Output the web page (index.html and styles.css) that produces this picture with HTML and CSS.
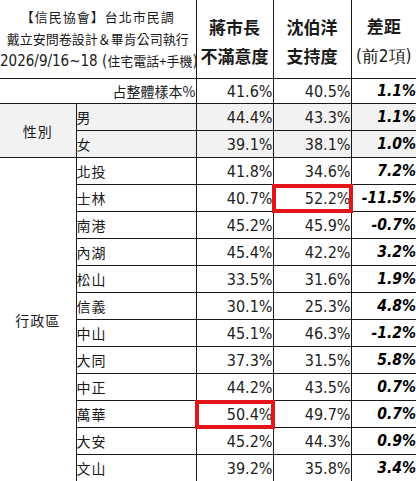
FILE: index.html
```html
<!DOCTYPE html>
<html lang="zh-Hant">
<head>
  <meta charset="UTF-8" />
  <meta name="viewport" content="width=device-width, initial-scale=1.0"/>
  <title>信民協會 台北市民調</title>
  <link rel="stylesheet" href="styles.css">
</head>
<body>
  <table class="poll">
    <colgroup>
      <col class="c-group">
      <col class="c-name">
      <col class="c-num">
      <col class="c-num2">
      <col class="c-diff">
    </colgroup>
    <thead>
      <tr class="head-row">
        <th colspan="2" class="title">
          <div class="wide">【信民協會】台北市民調</div>
          <div>戴立安問卷設計＆畢肯公司執行</div>
          <div><span class="narrow">2026/9/16~18 (</span>住宅電話+手機<span class="narrow">)</span></div>
        </th>
        <th class="col-head">蔣市長<br>不滿意度</th>
        <th class="col-head">沈伯洋<br>支持度</th>
        <th class="col-head diff-head">差距<br><span class="narrow">(前2項)</span></th>
      </tr>
    </thead>
    <tbody>
      <tr class="sample">
        <td colspan="2" class="sample-label">占整體樣本%</td>
        <td class="num">41.6%</td>
        <td class="num">40.5%</td>
        <td class="num diff">1.1%</td>
      </tr>
      <tr class="gray">
        <td rowspan="2" class="group">性別</td>
        <td class="name">男</td>
        <td class="num">44.4%</td>
        <td class="num">43.3%</td>
        <td class="num diff">1.1%</td>
      </tr>
      <tr class="gray">
        <td class="name">女</td>
        <td class="num">39.1%</td>
        <td class="num">38.1%</td>
        <td class="num diff">1.0%</td>
      </tr>
      <tr>
        <td rowspan="13" class="group">行政區</td>
        <td class="name">北投</td>
        <td class="num">41.8%</td>
        <td class="num">34.6%</td>
        <td class="num diff">7.2%</td>
      </tr>
      <tr>
        <td class="name">士林</td>
        <td class="num">40.7%</td>
        <td class="num mark">52.2%</td>
        <td class="num diff">-11.5%</td>
      </tr>
      <tr>
        <td class="name">南港</td>
        <td class="num">45.2%</td>
        <td class="num">45.9%</td>
        <td class="num diff">-0.7%</td>
      </tr>
      <tr>
        <td class="name">內湖</td>
        <td class="num">45.4%</td>
        <td class="num">42.2%</td>
        <td class="num diff">3.2%</td>
      </tr>
      <tr>
        <td class="name">松山</td>
        <td class="num">33.5%</td>
        <td class="num">31.6%</td>
        <td class="num diff">1.9%</td>
      </tr>
      <tr>
        <td class="name">信義</td>
        <td class="num">30.1%</td>
        <td class="num">25.3%</td>
        <td class="num diff">4.8%</td>
      </tr>
      <tr>
        <td class="name">中山</td>
        <td class="num">45.1%</td>
        <td class="num">46.3%</td>
        <td class="num diff">-1.2%</td>
      </tr>
      <tr>
        <td class="name">大同</td>
        <td class="num">37.3%</td>
        <td class="num">31.5%</td>
        <td class="num diff">5.8%</td>
      </tr>
      <tr>
        <td class="name">中正</td>
        <td class="num">44.2%</td>
        <td class="num">43.5%</td>
        <td class="num diff">0.7%</td>
      </tr>
      <tr>
        <td class="name">萬華</td>
        <td class="num mark">50.4%</td>
        <td class="num">49.7%</td>
        <td class="num diff">0.7%</td>
      </tr>
      <tr>
        <td class="name">大安</td>
        <td class="num">45.2%</td>
        <td class="num">44.3%</td>
        <td class="num diff">0.9%</td>
      </tr>
      <tr>
        <td class="name">文山</td>
        <td class="num">39.2%</td>
        <td class="num">35.8%</td>
        <td class="num diff">3.4%</td>
      </tr>
    </tbody>
  </table>
</body>
</html>
```

FILE: styles.css
```css
body {
  margin: 0;
  background-color: #fff;
  font-family: "Noto Sans CJK TC", sans-serif;
  color: #1a1a1a;
  overflow: hidden;
}

.poll {
  border-collapse: collapse;
  table-layout: fixed;
  width: 416px;
}

.c-group { width: 76px; }
.c-name { width: 120px; }
.c-num { width: 77px; }
.c-num2 { width: 78px; }
.c-diff { width: 65px; }

.poll th,
.poll td {
  border: 1px solid #1a1a1a;
  padding: 0;
}

.poll tr:first-child th {
  border-top: none;
}

.poll tr > :first-child {
  border-left: none;
}

.poll tr > :last-child {
  border-right: none;
}

.group {
  border-left: none;
}

.narrow {
  font-family: "Liberation Sans Narrow", "DejaVu Sans Condensed", sans-serif;
}

.head-row th {
  height: 74px;
  font-weight: normal;
}

.title {
  font-size: 13px;
  line-height: 22px;
  text-align: center;
  white-space: nowrap;
  padding-top: 2px;
}

.title .wide {
  letter-spacing: 1px;
}

.title .narrow {
  font-size: 15px;
}

.poll th.col-head {
  font-size: 17px;
  line-height: 29px;
  font-weight: bold;
  white-space: nowrap;
  padding-top: 4px;
}

.diff-head .narrow {
  font-size: 17px;
  font-weight: normal;
}

.sample td {
  height: 24px;
}

.sample-label {
  text-align: right;
  font-size: 14px;
  padding-right: 3px;
}

.poll tbody tr:not(.sample) td {
  height: 26px;
}

.gray td {
  background-color: #f2f2f2;
}

.group {
  text-align: center;
  font-size: 14px;
  letter-spacing: 1px;
}

.name {
  font-size: 14px;
  padding-left: 4px;
  letter-spacing: 1px;
}

.num {
  font-family: "Liberation Sans Narrow", "DejaVu Sans Condensed", sans-serif;
  font-size: 16px;
  text-align: right;
  padding-right: 3px;
  color: #222;
}

.diff {
  font-size: 15.5px;
  font-weight: bold;
  font-style: italic;
  color: #000;
  padding-right: 4px;
}

.poll td.mark {
  position: relative;
}

.mark::after {
  content: "";
  position: absolute;
  top: -1px;
  left: -2px;
  right: -2px;
  bottom: -2px;
  border: 4px solid #e3151b;
}
```
